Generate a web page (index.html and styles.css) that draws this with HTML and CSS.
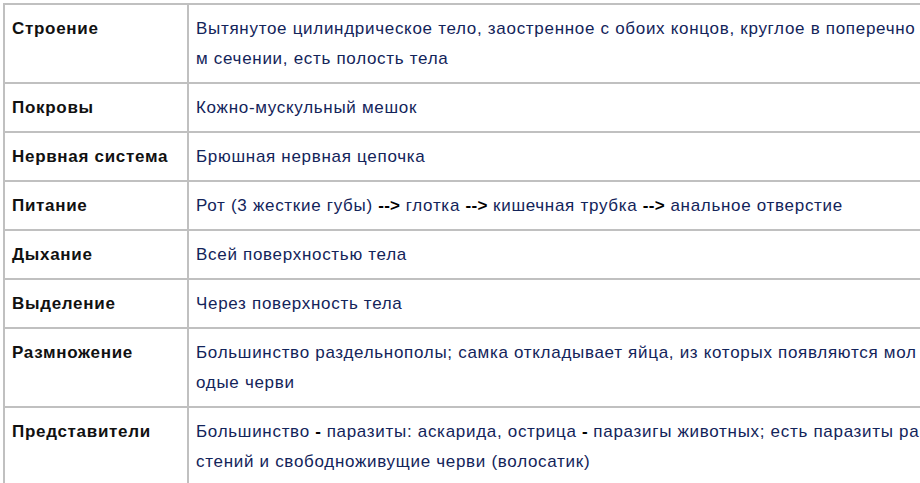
FILE: index.html
```html
<!DOCTYPE html>
<html lang="ru">
<head>
<meta charset="utf-8">
<link rel="stylesheet" href="styles.css">
</head>
<body>
<table class="info">
  <tr>
    <td class="term">Строение</td>
    <td class="desc">Вытянутое цилиндрическое тело, заостренное с обоих концов, круглое в поперечном сечении, есть полость тела</td>
  </tr>
  <tr>
    <td class="term">Покровы</td>
    <td class="desc">Кожно-мускульный мешок</td>
  </tr>
  <tr>
    <td class="term">Нервная система</td>
    <td class="desc">Брюшная нервная цепочка</td>
  </tr>
  <tr>
    <td class="term">Питание</td>
    <td class="desc">Рот (3 жесткие губы) <span class="dark">--&gt;</span> глотка <span class="dark">--&gt;</span> кишечная трубка <span class="dark">--&gt;</span> анальное отверстие</td>
  </tr>
  <tr>
    <td class="term">Дыхание</td>
    <td class="desc">Всей поверхностью тела</td>
  </tr>
  <tr>
    <td class="term">Выделение</td>
    <td class="desc">Через поверхность тела</td>
  </tr>
  <tr>
    <td class="term">Размножение</td>
    <td class="desc">Большинство раздельнополы; самка откладывает яйца, из которых появляются молодые черви</td>
  </tr>
  <tr>
    <td class="term">Представители</td>
    <td class="desc">Большинство <span class="dark">-</span> паразиты: аскарида, острица <span class="dark">-</span> паразигы животных; есть паразиты растений и свободноживущие черви (волосатик)</td>
  </tr>
</table>
</body>
</html>
```

FILE: styles.css
```css
html, body {
  margin: 0;
  background: #fff;
}
body {
  padding: 3px 0 0 3px;
  font-family: "Liberation Sans", Arial, sans-serif;
  font-size: 17px;
  letter-spacing: 0.7px;
}
.info {
  border-collapse: collapse;
  width: 930px;
  table-layout: fixed;
}
.info td {
  border: 2px solid #c0c0c0;
  padding: 9px 7px 8px 7px;
  line-height: 30px;
  vertical-align: top;
}
.term {
  width: 168px;
  font-weight: bold;
  color: #111;
}
.desc {
  color: #13245a;
  word-break: break-all;
}
.dark {
  color: #000;
  font-weight: bold;
  letter-spacing: 0.3px;
}
```
